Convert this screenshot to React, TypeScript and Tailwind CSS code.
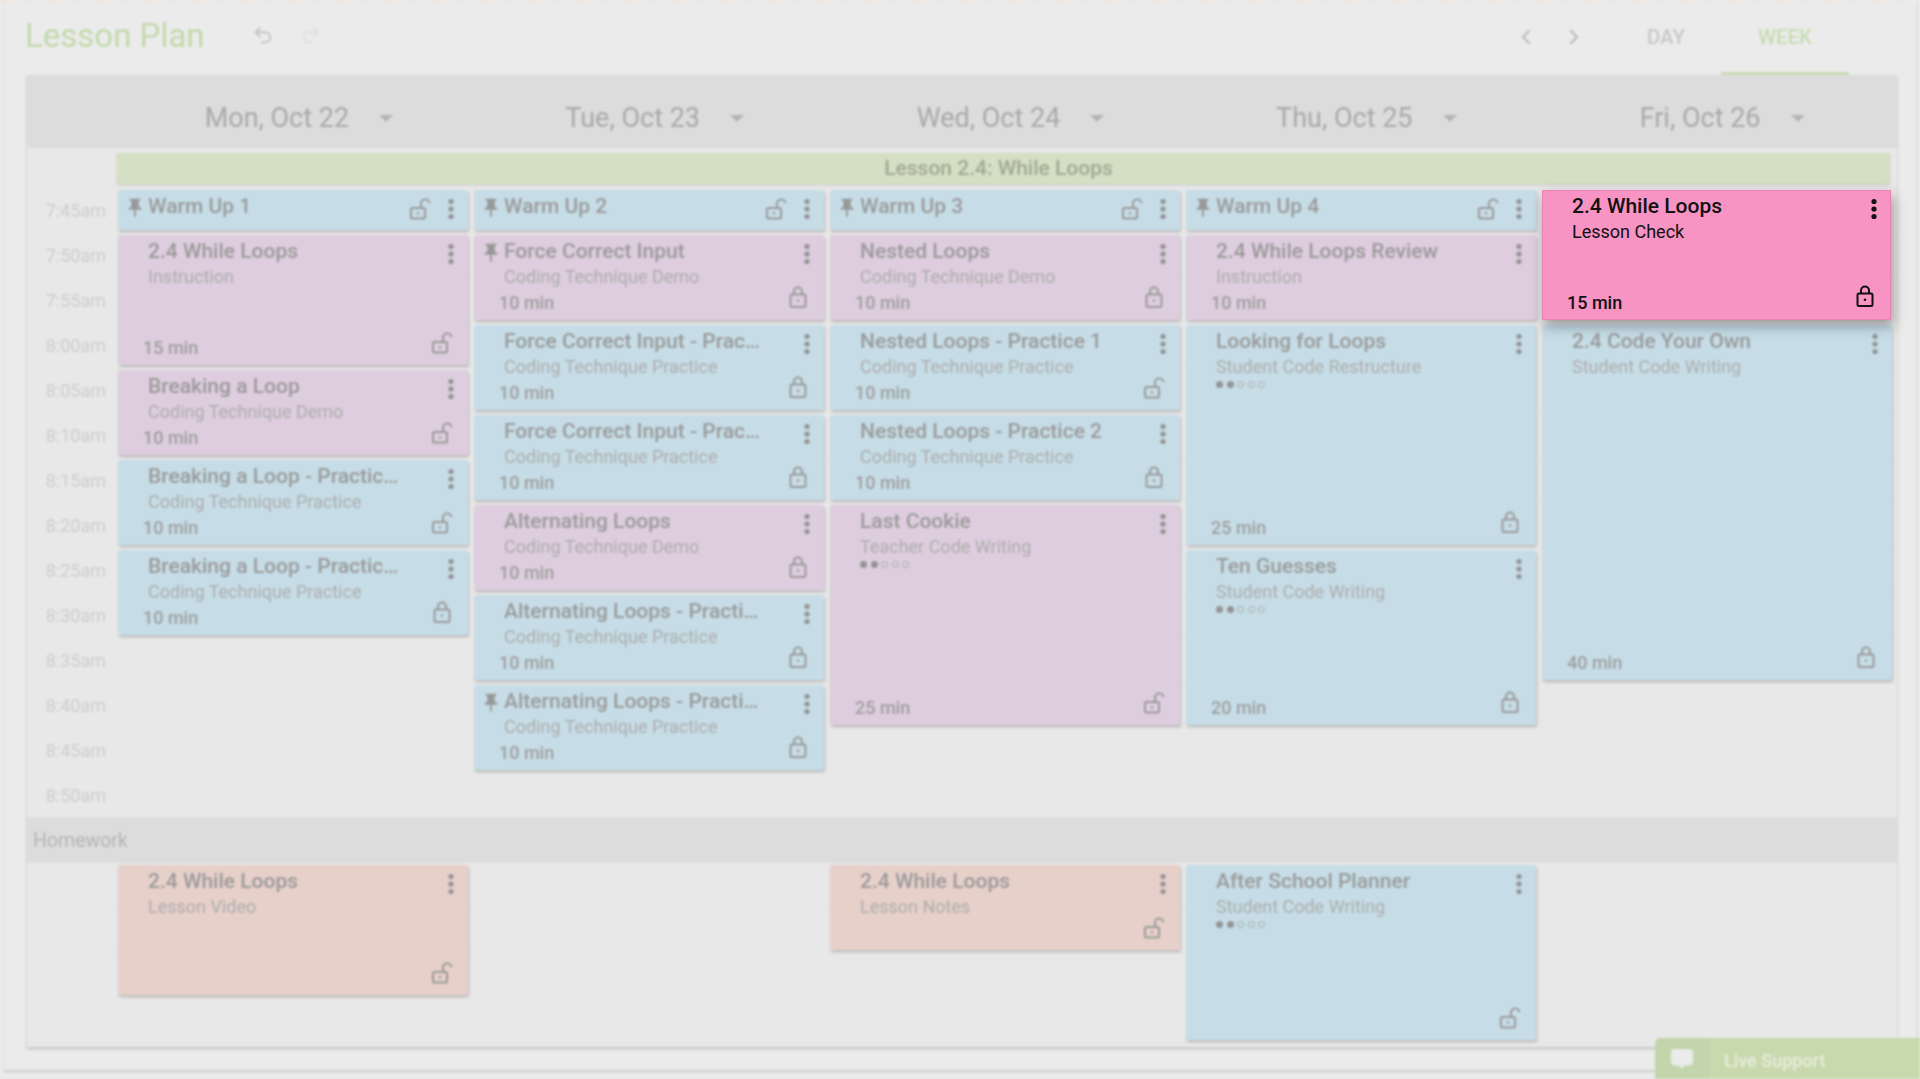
import { ChevronLeft, ChevronRight, Redo2, Undo2 } from 'lucide-react'

type CardData = {
  title: string
  sub?: string
  min?: string
  rows: 1 | 2 | 3 | 4 | 5 | 8
  tone: 'blue' | 'purple' | 'salmon'
  pin?: boolean
  locked?: boolean
  noLock?: boolean
  dots?: boolean
}

const HEIGHTS = {
  1: 'h-[40px]',
  2: 'h-[85px]',
  3: 'h-[130px]',
  4: 'h-[175px]',
  5: 'h-[220px]',
  8: 'h-[355px]',
}

const TONES = {
  blue: 'bg-[#c6dde7]',
  purple: 'bg-[#decdde]',
  salmon: 'bg-[#e8d0ca]',
}

const DAYS = ['Mon, Oct 22', 'Tue, Oct 23', 'Wed, Oct 24', 'Thu, Oct 25', 'Fri, Oct 26']

const TIMES = [
  '7:45am', '7:50am', '7:55am', '8:00am', '8:05am', '8:10am', '8:15am',
  '8:20am', '8:25am', '8:30am', '8:35am', '8:40am', '8:45am', '8:50am',
]

const DEMO = 'Coding Technique Demo'
const PRACTICE = 'Coding Technique Practice'

const SCHEDULE: CardData[][] = [
  [
    { title: 'Warm Up 1', rows: 1, tone: 'blue', pin: true },
    { title: '2.4 While Loops', sub: 'Instruction', min: '15 min', rows: 3, tone: 'purple' },
    { title: 'Breaking a Loop', sub: DEMO, min: '10 min', rows: 2, tone: 'purple' },
    { title: 'Breaking a Loop - Practice 1', sub: PRACTICE, min: '10 min', rows: 2, tone: 'blue' },
    { title: 'Breaking a Loop - Practice 2', sub: PRACTICE, min: '10 min', rows: 2, tone: 'blue', locked: true },
  ],
  [
    { title: 'Warm Up 2', rows: 1, tone: 'blue', pin: true },
    { title: 'Force Correct Input', sub: DEMO, min: '10 min', rows: 2, tone: 'purple', pin: true, locked: true },
    { title: 'Force Correct Input - Practice 1', sub: PRACTICE, min: '10 min', rows: 2, tone: 'blue', locked: true },
    { title: 'Force Correct Input - Practice 2', sub: PRACTICE, min: '10 min', rows: 2, tone: 'blue', locked: true },
    { title: 'Alternating Loops', sub: DEMO, min: '10 min', rows: 2, tone: 'purple', locked: true },
    { title: 'Alternating Loops - Practice 1', sub: PRACTICE, min: '10 min', rows: 2, tone: 'blue', locked: true },
    { title: 'Alternating Loops - Practice 2', sub: PRACTICE, min: '10 min', rows: 2, tone: 'blue', pin: true, locked: true },
  ],
  [
    { title: 'Warm Up 3', rows: 1, tone: 'blue', pin: true },
    { title: 'Nested Loops', sub: DEMO, min: '10 min', rows: 2, tone: 'purple', locked: true },
    { title: 'Nested Loops - Practice 1', sub: PRACTICE, min: '10 min', rows: 2, tone: 'blue' },
    { title: 'Nested Loops - Practice 2', sub: PRACTICE, min: '10 min', rows: 2, tone: 'blue', locked: true },
    { title: 'Last Cookie', sub: 'Teacher Code Writing', min: '25 min', rows: 5, tone: 'purple', dots: true },
  ],
  [
    { title: 'Warm Up 4', rows: 1, tone: 'blue', pin: true },
    { title: '2.4 While Loops Review', sub: 'Instruction', min: '10 min', rows: 2, tone: 'purple', noLock: true },
    { title: 'Looking for Loops', sub: 'Student Code Restructure', min: '25 min', rows: 5, tone: 'blue', locked: true, dots: true },
    { title: 'Ten Guesses', sub: 'Student Code Writing', min: '20 min', rows: 4, tone: 'blue', locked: true, dots: true },
  ],
  [
    { title: '2.4 Code Your Own', sub: 'Student Code Writing', min: '40 min', rows: 8, tone: 'blue', locked: true },
  ],
]

const HOMEWORK: (CardData | null)[] = [
  { title: '2.4 While Loops', sub: 'Lesson Video', rows: 3, tone: 'salmon' },
  null,
  { title: '2.4 While Loops', sub: 'Lesson Notes', rows: 2, tone: 'salmon' },
  { title: 'After School Planner', sub: 'Student Code Writing', rows: 4, tone: 'blue', dots: true },
  null,
]

function LockIcon({ open, className }: { open?: boolean; className: string }) {
  return (
    <svg viewBox="0 0 24 24" fill="none" stroke="currentColor" strokeWidth="2" className={className}>
      {open ? (
        <>
          <rect x="3" y="11" width="14" height="10.5" rx="1.5" />
          <path d="M13 11V7a4.2 4.2 0 0 1 8.4-.8" />
          <circle cx="10" cy="16.2" r="1.2" fill="currentColor" stroke="none" />
        </>
      ) : (
        <>
          <rect x="4.5" y="9.5" width="15" height="12.5" rx="1.5" />
          <path d="M8 9.5V6.5a4 4 0 0 1 8 0v3" />
          <circle cx="12" cy="15.7" r="1.3" fill="currentColor" stroke="none" />
        </>
      )}
    </svg>
  )
}

function MenuDots({ className }: { className: string }) {
  return (
    <svg viewBox="0 0 24 24" fill="currentColor" className={className}>
      <circle cx="12" cy="4.5" r="2.6" />
      <circle cx="12" cy="12" r="2.6" />
      <circle cx="12" cy="19.5" r="2.6" />
    </svg>
  )
}

function PinIcon() {
  return (
    <svg viewBox="0 0 24 24" fill="currentColor" className="h-[22px] w-[22px]">
      <path d="M16 9V4h1c.55 0 1-.45 1-1s-.45-1-1-1H7c-.55 0-1 .45-1 1s.45 1 1 1h1v5c0 1.66-1.34 3-3 3v2h5.97v7l1 1 1-1v-7H19v-2c-1.66 0-3-1.34-3-3z" />
    </svg>
  )
}

function Dots() {
  return (
    <div className="mt-[3px] flex gap-[3.5px]">
      <span className="h-[7px] w-[7px] rounded-full bg-[#949494]" />
      <span className="h-[7px] w-[7px] rounded-full bg-[#949494]" />
      <span className="h-[7px] w-[7px] rounded-full border border-[#a8a8a8]" />
      <span className="h-[7px] w-[7px] rounded-full border border-[#a8a8a8]" />
      <span className="h-[7px] w-[7px] rounded-full border border-[#a8a8a8]" />
    </div>
  )
}

function Card({ card }: { card: CardData }) {
  const isShort = card.rows === 1
  return (
    <div className={`flex w-[350px] flex-col rounded-[2px] shadow-[1px_2px_3px_rgba(0,0,0,0.2)] ${HEIGHTS[card.rows]} ${TONES[card.tone]}`}>
      <div className="flex items-start">
        <div className="flex w-[30px] shrink-0 justify-end pt-[7px] pr-[2px] text-[#989898]">{card.pin && <PinIcon />}</div>
        <div className="min-w-0 flex-1 pt-[4px]">
          <div className="w-[258px] truncate text-[21px] leading-[25px] font-medium text-[#9a9a9a]">{card.title}</div>
          {card.sub && <div className="mt-[2px] text-[18px] leading-[22px] text-[#adadad]">{card.sub}</div>}
          {card.dots && <Dots />}
        </div>
        {isShort && <LockIcon open className="mt-[7px] mr-[7px] h-[24px] w-[24px] text-[#9a9a9a]" />}
        <MenuDots className="mt-[7px] mr-[5px] h-[24px] w-[24px] text-[#929292]" />
      </div>
      {!isShort && (
        <div className="mt-auto flex h-[32px] items-end justify-between pr-[14px] pb-[5px] pl-[25px]">
          <span className="text-[18px] leading-[24px] font-medium text-[#9e9e9e]">{card.min}</span>
          {!card.noLock && (
            <LockIcon open={!card.locked} className={`h-[24px] w-[24px] text-[#9a9a9a] ${card.locked ? 'mb-[6px]' : 'mb-[5px]'}`} />
          )}
        </div>
      )}
    </div>
  )
}

// selected card sits over the dimmed, blurred page
function ActiveCard() {
  return (
    <div className="absolute top-[190px] left-[1542px] flex h-[130px] w-[349px] flex-col border border-[#e884b4] bg-[#f794c4] text-[#111111] shadow-[2px_6px_12px_rgba(0,0,0,0.35)]">
      <div className="flex items-start">
        <div className="min-w-0 flex-1 pt-[3px] pl-[29px]">
          <div className="text-[21px] leading-[25px] font-medium">2.4 While Loops</div>
          <div className="mt-[2px] text-[18px] leading-[22px]">Lesson Check</div>
        </div>
        <MenuDots className="mt-[6px] mr-[4px] h-[24px] w-[24px]" />
      </div>
      <div className="mt-auto flex items-end justify-between pr-[13px] pb-[4px] pl-[24px]">
        <span className="text-[18px] leading-[24px] font-medium">15 min</span>
        <LockIcon className="mb-[7px] h-[24px] w-[24px]" />
      </div>
    </div>
  )
}

export default function App() {
  return (
    <div className="relative h-[1079px] w-[1920px] overflow-hidden bg-[#ebebeb] font-[Roboto,sans-serif]">
      <div className="h-full blur-[1.2px]">
        <div className="h-[2px] bg-[repeating-linear-gradient(90deg,#eee2d9_0_11px,#ebebeb_11px_24px)]" />
        <div className="ml-[4px] h-[1068px] w-[1913px] border-r border-[#dcdcdc] bg-[#ebebeb] px-[23px] shadow-[0_2px_2px_rgba(0,0,0,0.14)]">
          <div className="flex h-[73px] items-center">
            <h1 className="-ml-[2px] w-[227px] pb-[6px] text-[33px] font-normal text-[#c3d9ab]">Lesson Plan</h1>
            <div className="flex items-center pb-[8px]">
              <Undo2 size={22} className="text-[#c4c4c4]" />
              <Redo2 size={22} className="ml-[26px] text-[#e0e0e0]" />
            </div>
            <div className="ml-auto flex items-center">
              <ChevronLeft size={24} strokeWidth={2.4} className="mb-[4px] text-[#bdbdbd]" />
              <ChevronRight size={24} strokeWidth={2.4} className="mb-[4px] ml-[24px] text-[#bdbdbd]" />
              <div className="ml-[25px] flex h-[73px] w-[110px] items-center justify-center pb-[2px] text-[20.5px] font-medium text-[#c8c8c8]">DAY</div>
              <div className="flex h-[73px] w-[128px] items-center justify-center border-b-[3px] border-[#c9dcb3] text-[20.5px] font-medium text-[#c8dcb3]">WEEK</div>
              <div className="w-[44px]" />
            </div>
          </div>

          <div className="h-[972px] w-[1870px] bg-[#e8e8e8] shadow-[0_2px_3px_rgba(0,0,0,0.18)]">
            <div className="flex h-[73px] bg-[#dcdcdc] pl-[91px]">
              {DAYS.map(day => (
                <div key={day} className="mr-[6px] flex w-[350px] items-center justify-center gap-[30px] pt-[14px] pl-[12px] text-[27px] text-[#a9a9a9]">
                  {day}
                  <span className="h-0 w-0 border-x-[7px] border-t-[7px] border-x-transparent border-t-[#b4b4b4]" />
                </div>
              ))}
            </div>

            <div className="h-[39px] pt-[5px] pl-[90px]">
              <div className="flex h-[31px] w-[1773px] items-center justify-center bg-[#d5dfc3] pr-[10px] text-[21px] font-medium text-[#a0a894] shadow-[0_1px_2px_rgba(0,0,0,0.15)]">
                Lesson 2.4: While Loops
              </div>
            </div>

            <div className="flex">
              <div className="w-[88px] shrink-0">
                {TIMES.map(time => (
                  <div key={time} className="flex h-[45px] items-center justify-end border-t border-[#e4e4e4] pr-[9px] text-[18px] text-[#cdcdcd]">
                    {time}
                  </div>
                ))}
              </div>
              <div className="ml-[3px] flex flex-1 gap-[6px] bg-[repeating-linear-gradient(180deg,#e4e4e4_0_1px,#e8e8e8_1px_45px)] pt-[3px]">
                {SCHEDULE.map((cards, i) => (
                  <div key={DAYS[i]} className="flex w-[350px] flex-col gap-[5px]">
                    {i === 4 && <div className="h-[130px]" />}
                    {cards.map(card => (
                      <Card key={card.title} card={card} />
                    ))}
                  </div>
                ))}
              </div>
            </div>

            <div className="flex h-[46px] items-center bg-[#dcdcdc] pt-[2px] pl-[6px] text-[19.5px] text-[#b4b4b4]">Homework</div>

            <div className="flex h-[183px] bg-[repeating-linear-gradient(180deg,#e8e8e8_0_44px,#e4e4e4_44px_45px)] pt-[2px] pl-[91px]">
              <div className="flex gap-[6px]">
                {HOMEWORK.map((card, i) => (
                  <div key={DAYS[i]} className="w-[350px]">
                    {card && <Card card={card} />}
                  </div>
                ))}
              </div>
            </div>
          </div>
        </div>

        <div className="absolute right-0 bottom-0 flex h-[41px] w-[265px] items-center rounded-tl-[6px] bg-[#c8d9ad]">
          <div className="flex h-full w-[54px] items-center justify-center rounded-tl-[6px] bg-[#c3d5aa]">
            <svg viewBox="0 0 24 24" fill="#ebebeb" className="h-[28px] w-[28px]">
              <path d="M6 3.5h12a3.5 3.5 0 0 1 3.5 3.5v7a3.5 3.5 0 0 1-3.5 3.5h-4l-2.5 3.5-2-3.5H6A3.5 3.5 0 0 1 2.5 14V7A3.5 3.5 0 0 1 6 3.5z" />
            </svg>
          </div>
          <span className="ml-[15px] pt-[3px] text-[18px] font-medium text-[#e8ecdf]">Live Support</span>
        </div>
      </div>

      <ActiveCard />
    </div>
  )
}
